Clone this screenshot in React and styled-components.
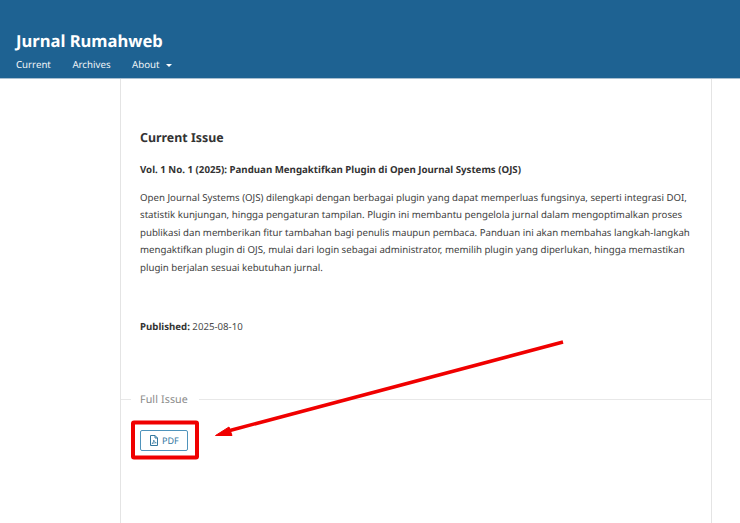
import React from "react";
import styled, { createGlobalStyle } from "styled-components";

const Global = createGlobalStyle`
  html, body { margin: 0; padding: 0; background: #fff; }
  body { font-family: "Noto Sans", sans-serif; color: rgba(0,0,0,.87); overflow: hidden; text-rendering: geometricPrecision; }
`;
const Page = styled.div`
  position: relative;
  width: 740px;
  height: 523px;
  overflow: hidden;
`;
const Header = styled.header`
  height: 79px;
  box-sizing: border-box;
  background: #1e6292;
  border-bottom: 1px solid #a9bfd0;
  padding: 30px 0 0 16px;
  color: #fff;
`;
const Brand = styled.div`
  font-size: 16.6px;
  font-weight: 700;
  line-height: 22px;
`;
const Nav = styled.nav`
  display: flex;
  gap: 21.5px;
  margin-top: 5px;
  font-size: 9.7px;
  line-height: 15px;
  color: #f2f6f9;
`;
const Caret = styled.span`
  display: inline-block;
  margin-left: 6px;
  vertical-align: middle;
  border-top: 3px solid #fff;
  border-left: 3px solid transparent;
  border-right: 3px solid transparent;
`;
const Main = styled.main`
  width: 592px;
  height: 444px;
  box-sizing: border-box;
  margin-left: 120px;
  border-left: 1px solid #e4e4e4;
  border-right: 1px solid #e4e4e4;
  padding-top: 50px;
`;
const Title = styled.h1`
  margin: 0 19px;
  font-size: 12.4px;
  line-height: 18px;
  font-weight: 700;
  color: #333;
`;
const Issue = styled.h2`
  margin: 14px 19px 0;
  font-size: 9.7px;
  line-height: 17px;
  font-weight: 700;
  color: #333;
`;
const Description = styled.p`
  margin: 11px 19px 0;
  font-size: 9.67px;
  line-height: 17.4px;
  color: #3d3d3d;
  white-space: nowrap;
`;
const Published = styled.p`
  margin: 42px 19px 0;
  font-size: 9.67px;
  line-height: 17px;
  color: #4a4a4a;
  strong { color: #333; }
`;
const Section = styled.div`
  display: flex;
  align-items: center;
  margin-top: 56.500px;
  font-size: 10.7px;
  line-height: 16px;
  color: #8a8a8a;
  letter-spacing: .1px;
`;
const Rule = styled.span`
  height: 1px;
  background: #e8e8e8;
  flex: ${(p) => (p.$grow ? 1 : "0 0 10px")};
`;
const SectionLabel = styled.span`
  padding: 0 11px 0 9px;
`;
const PdfButton = styled.a`
  display: flex;
  align-items: center;
  gap: 3px;
  box-sizing: border-box;
  width: 48px;
  height: 21px;
  margin: 22.500px 0 0 19px;
  padding-left: 8px;
  border: 1px solid #4f93bb;
  border-radius: 2px;
  font-size: 9px;
  color: #34789f;
`;
const Annotation = styled.svg`
  position: absolute;
  inset: 0;
  pointer-events: none;
`;

export default function App() {
  return (
    <Page>
      <Global />
      <Header>
        <Brand>Jurnal Rumahweb</Brand>
        <Nav>
          <span>Current</span>
          <span>Archives</span>
          <span>About<Caret /></span>
        </Nav>
      </Header>
      <Main>
        <Title>Current Issue</Title>
        <Issue>Vol. 1 No. 1 (2025): Panduan Mengaktifkan Plugin di Open Journal Systems (OJS)</Issue>
        <Description>
          Open Journal Systems (OJS) dilengkapi dengan berbagai plugin yang dapat memperluas fungsinya, seperti integrasi DOI,<br />
          statistik kunjungan, hingga pengaturan tampilan. Plugin ini membantu pengelola jurnal dalam mengoptimalkan proses<br />
          publikasi dan memberikan fitur tambahan bagi penulis maupun pembaca. Panduan ini akan membahas langkah-langkah<br />
          mengaktifkan plugin di OJS, mulai dari login sebagai administrator, memilih plugin yang diperlukan, hingga memastikan<br />
          plugin berjalan sesuai kebutuhan jurnal.
        </Description>
        <Published><strong>Published:</strong> 2025-08-10</Published>
        <Section>
          <Rule />
          <SectionLabel>Full Issue</SectionLabel>
          <Rule $grow />
        </Section>
        <PdfButton>
          <svg width="10" height="11" viewBox="0 0 10 11" fill="none" stroke="#34789f" strokeWidth="1">
            <path d="M1.5.5h4.500l2.500 2.500v7.500h-7z" />
            <path d="M6 .5v2.500h2.500" />
            <path d="M2.800 8.800c1.500-1 2-2.500 1.900-3.800.6 1.500 1.300 2.300 2.600 2.800-1.700-.1-3.200.2-4.500 1z" strokeWidth=".7" />
          </svg>
          PDF
        </PdfButton>
      </Main>
      <Annotation width="740" height="523" viewBox="0 0 740 523">
        <rect x="133" y="422.500" width="64" height="35" rx="1" fill="none" stroke="#f00000" strokeWidth="4" />
        <path d="M563 342 L228 431" stroke="#f00000" strokeWidth="3.500" fill="none" />
        <path d="M215.500 435.500 L229 427 L232 435.500 Z" fill="#f00000" stroke="#f00000" strokeWidth="1" />
      </Annotation>
    </Page>
  );
}
